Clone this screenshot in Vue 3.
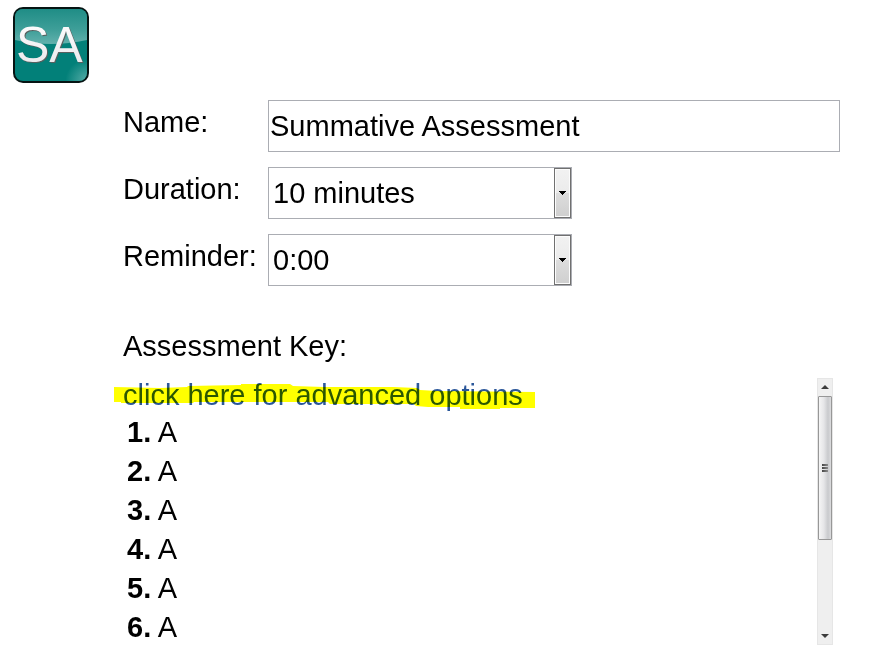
<script setup>
import { ref } from 'vue'

const name = ref('Summative Assessment')
const duration = ref('10 minutes')
const reminder = ref('0:00')
const answers = ref(['A', 'A', 'A', 'A', 'A', 'A'])
</script>

<template>
  <main class="page">
    <header class="brand">
      <svg class="logo" viewBox="0 0 76 76" role="img" aria-label="SA">
        <defs>
          <linearGradient id="gloss" x1="0" y1="0" x2="0" y2="1">
            <stop offset="0" stop-color="#1f8d86" />
            <stop offset="0.6" stop-color="#3f9f99" />
            <stop offset="1" stop-color="#62b1ad" />
          </linearGradient>
          <radialGradient id="corner" cx="1" cy="1" r="0.3">
            <stop offset="0" stop-color="#6db8b4" stop-opacity="0.8" />
            <stop offset="1" stop-color="#6db8b4" stop-opacity="0" />
          </radialGradient>
          <linearGradient id="letters" x1="0" y1="0" x2="0" y2="1">
            <stop offset="0" stop-color="#ffffff" />
            <stop offset="1" stop-color="#e6e6ea" />
          </linearGradient>
          <clipPath id="tile"><rect x="2" y="2" width="72" height="72" rx="8" /></clipPath>
        </defs>
        <rect x="0" y="0" width="76" height="76" rx="10" fill="#061413" />
        <g clip-path="url(#tile)">
          <rect x="2" y="2" width="72" height="72" fill="#028079" />
          <path d="M2 2H74V33Q56 37 38 37T2 33Z" fill="url(#gloss)" />
          <rect x="2" y="2" width="72" height="72" fill="url(#corner)" />
        </g>
        <text x="4" y="56" class="mark shade">SA</text>
        <text x="3" y="55" class="mark" fill="url(#letters)">SA</text>
      </svg>
    </header>

    <form class="form" @submit.prevent>
      <label for="name">Name:</label>
      <input id="name" v-model="name" class="field" type="text" />

      <label for="duration">Duration:</label>
      <div class="picker">
        <select id="duration" v-model="duration" class="field">
          <option>10 minutes</option>
          <option>20 minutes</option>
          <option>30 minutes</option>
        </select>
        <span class="drop" aria-hidden="true">
          <svg width="7" height="4" viewBox="0 0 7 4"><path d="M0 0H7V1H6V2H5V3H4V4H3V3H2V2H1V1H0Z" /></svg>
        </span>
      </div>

      <label for="reminder">Reminder:</label>
      <div class="picker">
        <select id="reminder" v-model="reminder" class="field">
          <option>0:00</option>
          <option>1:00</option>
          <option>5:00</option>
        </select>
        <span class="drop" aria-hidden="true">
          <svg width="7" height="4" viewBox="0 0 7 4"><path d="M0 0H7V1H6V2H5V3H4V4H3V3H2V2H1V1H0Z" /></svg>
        </span>
      </div>
    </form>

    <section class="key">
      <h2>Assessment Key:</h2>
      <div class="panel">
        <div class="content">
          <a href="#advanced" class="advanced">click here for advanced options
            <svg class="marker" viewBox="0 0 422 26" aria-hidden="true">
              <path d="M0 3L46 4L73 3L74 2L127 1V0H176L179 2L210 3L279 3L303 4L306 6L323 7L421 8V24H386V25H346V23L314 23L302 22L300 20L216 20L214 18L136 18L80 18L79 19L7 19V18H0Z" />
            </svg>
          </a>
          <ol>
            <li v-for="(answer, i) in answers" :key="i"><b>{{ i + 1 }}.</b> {{ answer }}</li>
          </ol>
        </div>
        <div class="scrollbar" aria-hidden="true">
          <svg class="arrow" width="8" height="4" viewBox="0 0 8 4"><path d="M0 4L4 0L8 4Z" /></svg>
          <div class="thumb"><i></i><i></i><i></i></div>
          <div class="track"></div>
          <svg class="arrow" width="8" height="4" viewBox="0 0 8 4"><path d="M0 0L4 4L8 0Z" /></svg>
        </div>
      </div>
    </section>
  </main>
</template>

<style>
body {
  background: #fff;
}
</style>

<style scoped>
.page {
  font-family: "Liberation Sans", Arial, sans-serif;
  font-size: 29px;
  color: #000;
  padding: 7px 33px 22px 13px;
}
.brand {
  display: flex;
}
.logo {
  width: 76px;
  height: 76px;
}
.mark {
  font-size: 50px;
}
.shade {
  fill: #57605f;
}
.form {
  display: grid;
  grid-template-columns: 135px 1fr;
  column-gap: 10px;
  row-gap: 15px;
  margin-top: 17px;
  padding-left: 110px;
}
label {
  line-height: 44px;
  white-space: nowrap;
}
.field {
  box-sizing: border-box;
  width: 100%;
  height: 52px;
  margin: 0;
  padding: 0 1px;
  border: 1px solid #abadb3;
  border-radius: 0;
  background: #fff;
  color: #000;
  font: inherit;
  appearance: none;
}
select.field {
  padding: 0 20px 0 4px;
}
.picker {
  position: relative;
  width: 304px;
  height: 52px;
}
.drop {
  position: absolute;
  top: 1px;
  right: 1px;
  bottom: 1px;
  width: 17px;
  box-sizing: border-box;
  display: flex;
  align-items: center;
  justify-content: center;
  border: 1px solid #707070;
  box-shadow: inset 0 0 0 1px #fcfcfc;
  background: linear-gradient(#f2f2f2, #ebebeb 50%, #dddddd 50%, #cfcfcf);
  pointer-events: none;
}
.key {
  margin-top: 40px;
  padding-left: 110px;
}
h2 {
  margin: 0;
  font-size: 29px;
  font-weight: 400;
  line-height: 40px;
}
.panel {
  display: flex;
  justify-content: space-between;
  margin-top: 12px;
  margin-right: 7px;
  height: 267px;
}
.content {
  flex: 1;
}
.advanced {
  display: inline-block;
  position: relative;
  line-height: 34px;
  color: #2b579a;
  text-decoration: none;
  white-space: nowrap;
  vertical-align: top;
}
.marker {
  position: absolute;
  left: -9px;
  top: 6px;
  width: 422px;
  height: 26px;
  fill: #ff0;
  mix-blend-mode: multiply;
}
ol {
  margin: 0;
  padding: 1px 0 0 4px;
  list-style: none;
}
li {
  line-height: 39px;
}
.scrollbar {
  box-sizing: border-box;
  width: 16px;
  display: flex;
  flex-direction: column;
  align-items: center;
  border: 1px solid #e6e6e6;
  background: #efefef;
  padding: 6px 0;
}
.arrow {
  flex: none;
  fill: #3c3c3c;
}
.thumb {
  box-sizing: border-box;
  width: 14px;
  height: 144px;
  margin-top: 7px;
  display: flex;
  flex-direction: column;
  align-items: center;
  justify-content: center;
  gap: 1px;
  border: 1px solid #979797;
  border-radius: 1px;
  background: linear-gradient(90deg, #f5f5f5, #e6e6e8 40%, #c9cacd 75%, #dcdcde);
}
.thumb i {
  width: 6px;
  height: 2px;
  background: linear-gradient(90deg, #444, #8c8c8c);
}
.track {
  flex: 1;
}
</style>
